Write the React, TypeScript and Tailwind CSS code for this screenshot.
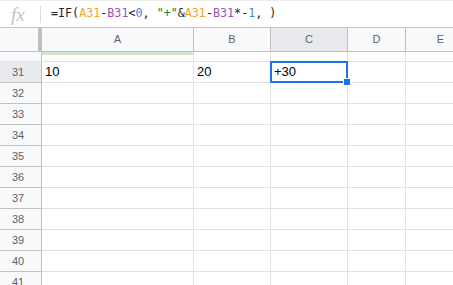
import React from 'react'

const cols = [
  { key: 'A', w: 'w-[152px]' },
  { key: 'B', w: 'w-[77px]' },
  { key: 'C', w: 'w-[77px]' },
  { key: 'D', w: 'w-[58px]' },
  { key: 'E', w: 'w-[70px]' },
]

const rows = [31, 32, 33, 34, 35, 36, 37, 38, 39, 40, 41]

const values: Record<string, string> = { A31: '10', B31: '20', C31: '+30' }

function Formula() {
  return (
    <div className="text-[11.7px] text-[#222] whitespace-pre" style={{ fontFamily: '"DejaVu Sans Mono", monospace' }}>
      <span>=IF(</span>
      <span className="text-[#f5a02e]">A31</span>
      <span>-</span>
      <span className="text-[#9b51b5]">B31</span>
      <span>&lt;</span>
      <span className="text-[#4a86e8]">0</span>
      <span>, </span>
      <span className="text-[#188038]">"+"</span>
      <span>&amp;</span>
      <span className="text-[#f5a02e]">A31</span>
      <span>-</span>
      <span className="text-[#9b51b5]">B31</span>
      <span>*-</span>
      <span className="text-[#4a86e8]">1</span>
      <span>, )</span>
    </div>
  )
}

export default function App() {
  return (
    <div className="w-[453px] h-[285px] overflow-hidden bg-white" style={{ fontFamily: 'Arial, "Liberation Sans", sans-serif' }}>
      {/* formula bar */}
      <div className="h-[28px] flex items-center border-t border-b border-t-[#ececec] border-b-[#c7c7c7]">
        <div className="w-[41px] flex items-center">
          <span className="ml-[11px] text-[19px] italic text-[#c3c3c3] leading-none" style={{ fontFamily: '"Liberation Serif", serif' }}>
            fx
          </span>
          <div className="ml-auto w-px h-[17px] bg-[#dadce0]" />
        </div>
        <div className="pl-[10px]">
          <Formula />
        </div>
      </div>

      {/* column header */}
      <div className="flex h-[24px] bg-[#f8f9fa] border-b border-[#c0c0c0] text-[11px] text-[#5f6368]">
        <div className="w-[42px] shrink-0 border-r-4 border-[#c0c0c0]" />
        {cols.map((c) => (
          <div
            key={c.key}
            className={`${c.w} shrink-0 flex items-center justify-center border-r border-[#c0c0c0] ${c.key === 'C' ? 'bg-[#e8eaed]' : ''}`}
          >
            {c.key}
          </div>
        ))}
      </div>

      {/* frozen spacer row */}
      <div className="flex h-[10px] border-b border-[#e2e2e2]">
        <div className="w-[42px] shrink-0 bg-[#f8f9fa] border-r border-[#c0c0c0]" />
        {cols.map((c) => (
          <div key={c.key} className={`${c.w} shrink-0 border-r border-[#e2e2e2]`}>
            {c.key === 'A' && <div className="h-[3px] bg-[#d4e8d1]" />}
          </div>
        ))}
      </div>

      {/* rows */}
      <div className="relative">
        {rows.map((r) => (
          <div key={r} className="flex h-[21px]">
            <div
              className={`w-[42px] shrink-0 flex items-center justify-center pr-[5px] text-[11px] text-[#5f6368] border-r border-b border-[#c0c0c0] ${r === 31 ? 'bg-[#e8eaed]' : 'bg-[#f8f9fa]'}`}
            >
              {r}
            </div>
            {cols.map((c) => (
              <div
                key={c.key}
                className={`${c.w} shrink-0 flex items-center pl-[3px] text-[13px] text-black border-r border-b border-[#e2e2e2]`}
              >
                {values[c.key + r]}
              </div>
            ))}
          </div>
        ))}

        {/* selection on C31 */}
        <div className="absolute left-[270px] top-[-1px] w-[78px] h-[22px] border-2 border-[#1a73e8]" />
        <div className="absolute left-[344px] top-[17px] w-[6px] h-[6px] bg-[#1a73e8] outline outline-1 outline-white" />
      </div>
    </div>
  )
}
